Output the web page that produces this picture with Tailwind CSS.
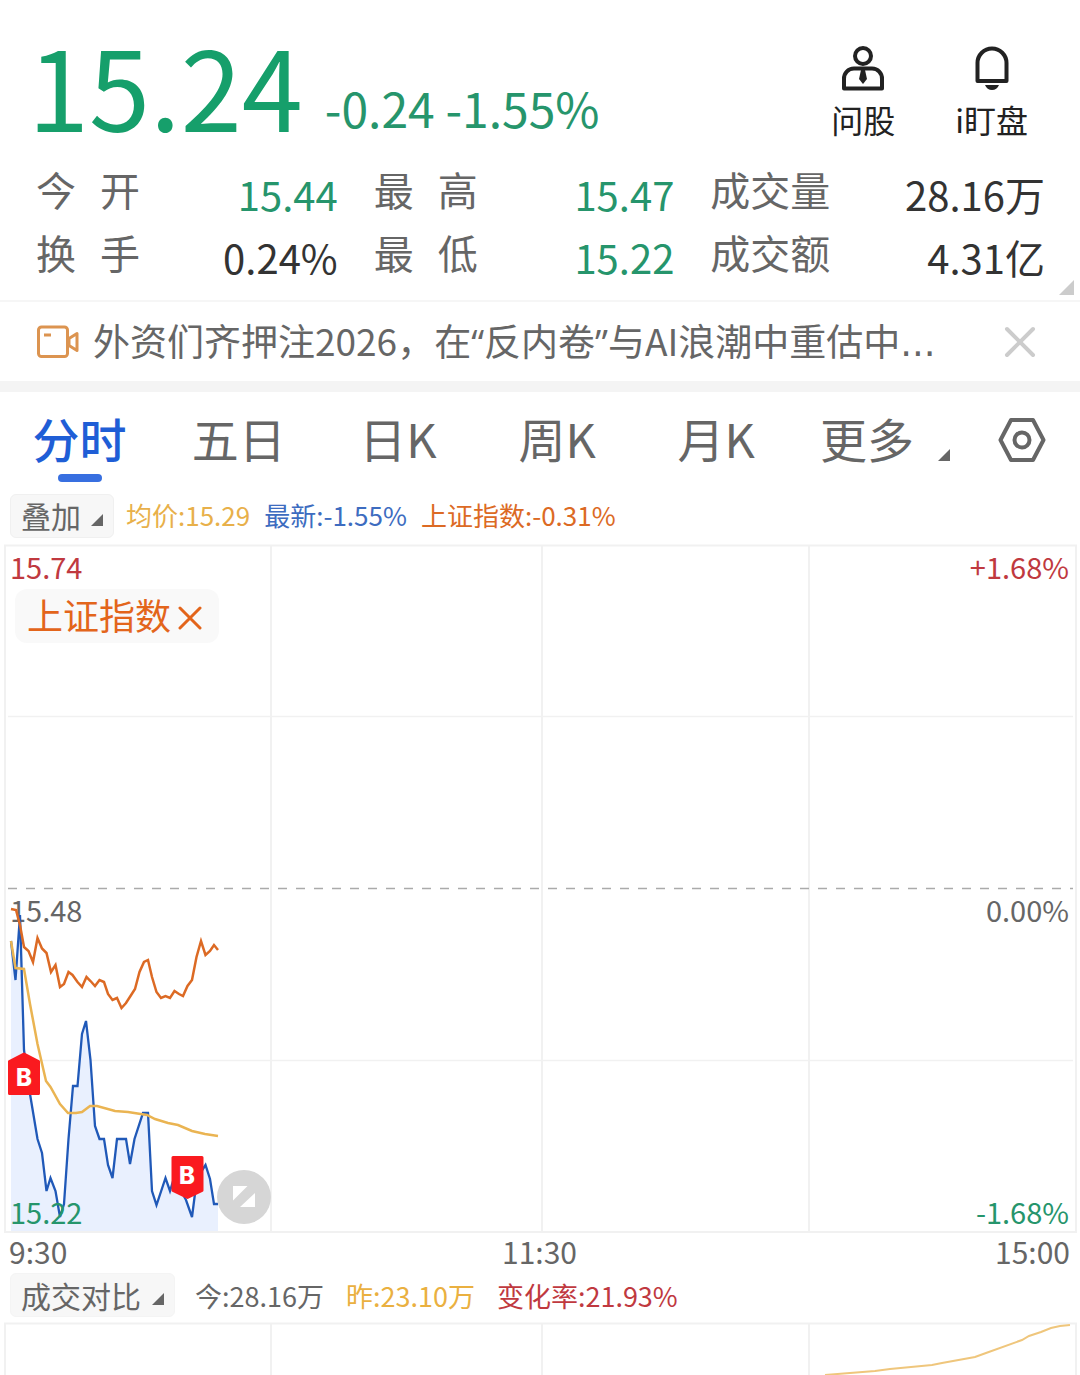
<!DOCTYPE html>
<html lang="zh-CN">
<head>
  <meta charset="UTF-8" />
  <meta name="viewport" content="width=device-width, initial-scale=1.0" />
  <title>分时行情</title>
  <script src="https://cdn.jsdelivr.net/npm/@tailwindcss/browser@4"></script>
  <style>
    body {
      font-family: "Noto Sans CJK SC", sans-serif;
    }
  </style>
</head>
<body class="bg-white text-[#666] overflow-x-hidden">

  <!-- Quote header -->
  <header class="relative border-b-2 border-[#f6f6f6] pb-[11px]">
    <div class="flex justify-between pl-7 pr-[52px]">
      <div class="flex items-end gap-[22px] pt-7">
        <span class="text-[110px] leading-[110px] text-[#169f6b]">15.24</span>
        <span class="text-[48px] leading-[64px] text-[#26956c] whitespace-nowrap">-0.24 -1.55%</span>
      </div>
      <div class="flex items-start gap-[60px] pt-[45px] text-[#222]">
        <button class="flex flex-col items-center gap-2">
          <svg class="w-[44px] h-[46px]" viewBox="0 0 44 46" fill="none" stroke="#222" stroke-width="4">
            <circle cx="22" cy="11" r="8" />
            <path d="M3 43.500V34a10 10 0 0 1 10-10.500h18a10 10 0 0 1 10 10.500v9.500z" stroke-linejoin="round" />
            <path d="M20 25h4l2 9-4 5-4-5z" fill="#222" stroke="none" />
          </svg>
          <span class="text-[32px] leading-10">问股</span>
        </button>
        <button class="flex flex-col items-center gap-2">
          <svg class="w-[44px] h-[46px]" viewBox="0 0 44 46" fill="none" stroke="#222" stroke-width="4">
            <path d="M7.500 36V18a14.500 14.500 0 0 1 29 0v18z" stroke-linejoin="round" />
            <path d="M15 40h14c-1 3-4 5-7 5s-6-2-7-5z" fill="#222" stroke="none" />
          </svg>
          <span class="text-[32px] leading-10">i盯盘</span>
        </button>
      </div>
    </div>

    <dl class="mt-[24px] grid grid-cols-[302fr_301fr_335fr] gap-x-9 pl-9 pr-[35px] text-[40px]">
      <div class="flex justify-between h-[63px]">
        <dt class="flex w-[104px] justify-between leading-[52px]"><span>今</span><span>开</span></dt>
        <dd class="leading-[62px] text-[#26956c]">15.44</dd>
      </div>
      <div class="flex justify-between h-[63px]">
        <dt class="flex w-[104px] justify-between leading-[52px]"><span>最</span><span>高</span></dt>
        <dd class="leading-[62px] text-[#26956c]">15.47</dd>
      </div>
      <div class="flex justify-between h-[63px]">
        <dt class="leading-[52px]">成交量</dt>
        <dd class="leading-[62px] text-[#333]">28.16万</dd>
      </div>
      <div class="flex justify-between h-[63px]">
        <dt class="flex w-[104px] justify-between leading-[52px]"><span>换</span><span>手</span></dt>
        <dd class="leading-[62px] text-[#333]">0.24%</dd>
      </div>
      <div class="flex justify-between h-[63px]">
        <dt class="flex w-[104px] justify-between leading-[52px]"><span>最</span><span>低</span></dt>
        <dd class="leading-[62px] text-[#26956c]">15.22</dd>
      </div>
      <div class="flex justify-between h-[63px]">
        <dt class="leading-[52px]">成交额</dt>
        <dd class="leading-[62px] text-[#333]">4.31亿</dd>
      </div>
    </dl>
    <svg class="absolute right-[6px] bottom-[5px] w-[15px] h-[15px]" viewBox="0 0 15 15"><path d="M15 0v15H0z" fill="#ccc" /></svg>
  </header>

  <!-- News -->
  <div class="flex items-center h-[90px] border-b-[11px] border-[#f4f4f4] pl-9 pr-[44px]">
    <svg class="shrink-0 w-[43px] h-[34px]" viewBox="0 0 43 34" fill="none" stroke="#dc9450" stroke-width="3">
      <rect x="2.500" y="2" width="29" height="29.500" rx="3" />
      <path d="M8 10h7M33 13.500l8-5v17l-8-5z" stroke-linejoin="round" />
    </svg>
    <a href="#" class="ml-[14px] text-[37px] leading-[74px] whitespace-nowrap">外资们齐押注2026，在<span class="font-['Open_Sans']">“</span>反内卷<span class="font-['Open_Sans']">”</span>与AI浪潮中重估中<span class="font-['DejaVu_Sans']">...</span></a>
    <button class="ml-auto" aria-label="关闭">
      <svg class="w-8 h-8" viewBox="0 0 32 32" stroke="#ccc" stroke-width="4" stroke-linecap="round"><path d="M3 3l26 26M29 3L3 29" /></svg>
    </button>
  </div>

  <!-- Period tabs -->
  <nav class="flex pt-[10px] pr-[34px] pb-3 text-[47px] leading-[72px]">
    <div class="grid grid-cols-6 grow items-start">
      <button class="flex flex-col items-center font-medium text-[#1f5ed6]">分时<span class="h-2 w-11 rounded-full bg-[#386fe0]"></span></button>
      <button>五日</button>
      <button>日K</button>
      <button>周K</button>
      <button>月K</button>
      <button class="flex justify-end gap-6 pr-[5px]">更多
        <svg class="mt-[47px] w-3 h-3" viewBox="0 0 12 12"><path d="M12 0v12H0z" fill="#666" /></svg>
      </button>
    </div>
    <button class="ml-[43px] self-start pt-[16px]" aria-label="设置">
      <svg class="w-12 h-[44px]" viewBox="0 0 48 44" fill="none" stroke="#666" stroke-width="4" stroke-linejoin="round">
        <path d="M13 2h22l10.500 20L35 42H13L2.500 22z" />
        <circle cx="24" cy="22" r="7.500" />
      </svg>
    </button>
  </nav>

  <div class="flex items-center h-11 pl-[10px] text-[26px] leading-[42px] whitespace-nowrap">
    <button class="flex items-center gap-[10px] h-11 rounded-md border border-[#f0f0f0] bg-[#f7f7f7] px-[10px] text-[30px] leading-10">
      <span class="h-[42px]">叠加</span>
      <svg class="mt-2 w-3 h-3" viewBox="0 0 12 12"><path d="M12 0v12H0z" fill="#666" /></svg>
    </button>
    <span class="ml-3 h-11 text-[#e8b04a]">均价:15.29</span>
    <span class="ml-[14px] h-11 text-[#3d6cc0]">最新:-1.55%</span>
    <span class="ml-[14px] h-11 text-[#dc6a24]">上证指数:-0.31%</span>
  </div>

  <!-- Intraday chart -->
  <div class="relative mt-[6px]">
    <svg class="block w-full" viewBox="0 544 1080 690" font-size="29" fill="none">
      <g stroke="#f1f1f1" stroke-width="2">
        <rect x="5" y="545.500" width="1071" height="686.500" />
        <path d="M271 546v686M542 546v686M809 546v686" />
        <path d="M8 716.500h1065M8 1060.500h1065" stroke-width="1.500" />
      </g>
      <path d="M8 888.500h1065" stroke="#aaa" stroke-width="1.500" stroke-dasharray="9 9" />

      <path d="M11 941L15.500 980 20 915 24 1050 30 1094 37.500 1139 42 1153 46.500 1191 50.500 1178 55.500 1191 60 1217 64 1204 68.500 1139 73 1086 77.500 1086 82 1034 86 1021 90.500 1060 95 1126 99.500 1139 104 1139 108 1165 112.500 1178 117 1139 126 1139 130 1164 134.500 1139 143 1113 148 1113 152 1191 156.500 1205 165.500 1178 170 1191 174 1178 186 1200 192 1217 197 1178 205.500 1165 210 1179 214 1204 218 1204V1231H11z" fill="#e9f0fe" />

      <text x="10" y="579" fill="#c0393f">15.74</text>
      <text x="1069" y="579" fill="#c0393f" text-anchor="end">+1.68%</text>
      <text x="10" y="922" fill="#666">15.48</text>
      <text x="1069" y="922" fill="#666" text-anchor="end">0.00%</text>
      <text x="1069" y="1224" fill="#26956c" text-anchor="end">-1.68%</text>

      <path d="M11 941L15.500 980 20 915 24 1050 30 1094 37.500 1139 42 1153 46.500 1191 50.500 1178 55.500 1191 60 1217 64 1204 68.500 1139 73 1086 77.500 1086 82 1034 86 1021 90.500 1060 95 1126 99.500 1139 104 1139 108 1165 112.500 1178 117 1139 126 1139 130 1164 134.500 1139 143 1113 148 1113 152 1191 156.500 1205 165.500 1178 170 1191 174 1178 186 1200 192 1217 197 1178 205.500 1165 210 1179 214 1204 218 1204" stroke="#2059b8" stroke-width="2.300" />
      <path d="M11 909L16 910 20 925 24 947 28.500 951 33 962 37.500 938 42 948.500 46.500 953 51 972 55.500 965 60 987 64 984 68.500 972 72.500 975 77.500 982 82 987 86.500 977 90.500 981 95 986 99.500 980 104 982 108 994 112.500 1000 117 998 121.500 1008 126 1003 130.500 996 135 989 139.500 972 144 962 148 960 152 977 156.500 992 161 998 165.500 996 170 998 174.500 991 179 994 183 996 187.500 986 192 980 196.500 957 201 941 205.500 955 210 951 214 945 218 950" stroke="#dc6a24" stroke-width="2.500" />
      <path d="M11 941L15.500 968 24 969 30 1004 37.500 1044 46 1081 50.500 1087 60 1104 68 1113 76 1113 82 1112 90 1106 97 1106 115 1111 128 1112 147 1115 155 1119 168 1123 178 1125 192 1131 205 1134 218 1136" stroke="#eab452" stroke-width="2.500" />
      <text x="10" y="1224" fill="#26956c">15.22</text>

      <!-- buy marks -->
      <g fill="#fa1a1f" stroke="#fa1a1f" stroke-width="3" stroke-linejoin="round">
        <path d="M24 1054l14.500 7.500v32h-29v-32z" />
        <path d="M187.500 1197.500l14.500-7v-33h-29v33z" />
      </g>
      <g fill="#fff" font-size="24" font-weight="800" font-family="Inter" text-anchor="middle">
        <text x="24" y="1086">B</text>
        <text x="187" y="1184">B</text>
      </g>

      <circle cx="244" cy="1197" r="27" fill="#d6d6d6" />
      <path d="M233 1186h14.500L233 1200.500zM255 1193v14h-15z" fill="#fff" />
    </svg>
    <button class="absolute left-[15px] top-[45px] flex items-center gap-[7px] h-[54px] rounded-xl bg-[#f9f9f9] pl-3 pr-[17px] text-[36px] leading-[50px] text-[#e3651b]">
      <span class="h-[54px]">上证指数</span>
      <svg class="mt-1 w-6 h-6" viewBox="0 0 24 24" stroke="#e3651b" stroke-width="3" stroke-linecap="round"><path d="M2 2l20 20M22 2L2 22" /></svg>
    </button>
  </div>

  <div class="grid grid-cols-3 h-[39px] pl-[9px] pr-[10px] text-[30px] leading-[34px]">
    <span>9:30</span>
    <span class="text-center">11:30</span>
    <span class="text-right">15:00</span>
  </div>

  <div class="flex items-center h-11 pl-[10px] text-[27px] leading-[46px] whitespace-nowrap">
    <button class="flex items-center gap-[11px] h-11 rounded-md border border-[#f4f4f4] bg-[#f7f7f7] px-[10px] text-[30px] leading-[42px]">成交对比
      <svg class="mt-2 w-3 h-3" viewBox="0 0 12 12"><path d="M12 0v12H0z" fill="#666" /></svg>
    </button>
    <span class="ml-5 h-11">今:28.16万</span>
    <span class="ml-[22px] h-11 text-[#eab040]">昨:23.10万</span>
    <span class="ml-[22px] h-11 text-[#c0393f]">变化率:21.93%</span>
  </div>

  <!-- Volume comparison -->
  <svg class="mt-[5px] block w-full" viewBox="0 1322 1080 53" fill="none">
    <path d="M5 1376V1323.500h1071V1376M271 1324v52M542 1324v52M809 1324v52" stroke="#f1f1f1" stroke-width="2" />
    <path d="M825 1375L875 1371 890 1369 932 1365 942 1363 975 1357 986 1353 1022 1340 1029 1336 1041 1332 1051 1328 1060 1326 1070 1325" stroke="#efc67c" stroke-width="2" />
  </svg>

</body>
</html>
